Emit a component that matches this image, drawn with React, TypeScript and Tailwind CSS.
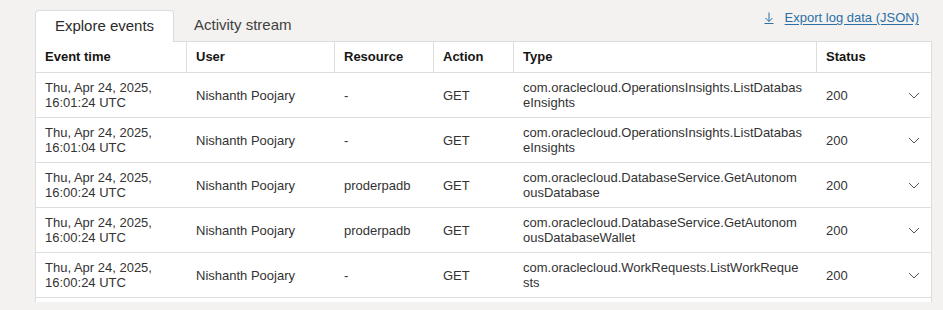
import React from "react";

type Row = {
  date: string;
  time: string;
  user: string;
  resource: string;
  action: string;
  type1: string;
  type2: string;
  status: string;
};

const rows: Row[] = [
  {
    date: "Thu, Apr 24, 2025,",
    time: "16:01:24 UTC",
    user: "Nishanth Poojary",
    resource: "-",
    action: "GET",
    type1: "com.oraclecloud.OperationsInsights.ListDatabas",
    type2: "eInsights",
    status: "200",
  },
  {
    date: "Thu, Apr 24, 2025,",
    time: "16:01:04 UTC",
    user: "Nishanth Poojary",
    resource: "-",
    action: "GET",
    type1: "com.oraclecloud.OperationsInsights.ListDatabas",
    type2: "eInsights",
    status: "200",
  },
  {
    date: "Thu, Apr 24, 2025,",
    time: "16:00:24 UTC",
    user: "Nishanth Poojary",
    resource: "proderpadb",
    action: "GET",
    type1: "com.oraclecloud.DatabaseService.GetAutonom",
    type2: "ousDatabase",
    status: "200",
  },
  {
    date: "Thu, Apr 24, 2025,",
    time: "16:00:24 UTC",
    user: "Nishanth Poojary",
    resource: "proderpadb",
    action: "GET",
    type1: "com.oraclecloud.DatabaseService.GetAutonom",
    type2: "ousDatabaseWallet",
    status: "200",
  },
  {
    date: "Thu, Apr 24, 2025,",
    time: "16:00:24 UTC",
    user: "Nishanth Poojary",
    resource: "-",
    action: "GET",
    type1: "com.oraclecloud.WorkRequests.ListWorkReque",
    type2: "sts",
    status: "200",
  },
];

const cols = "grid grid-cols-[151px_148px_99px_80px_303px_114px]";

function Chevron() {
  return (
    <svg width="12" height="7" viewBox="0 0 12 7" fill="none">
      <path d="M1 1 L6 6 L11 1" stroke="#555" strokeWidth="1" />
    </svg>
  );
}

function DownloadIcon() {
  return (
    <svg width="10" height="12" viewBox="0 0 10 12" fill="none">
      <path d="M5 0.5 V9.5" stroke="#2b6fa6" strokeWidth="1" />
      <path d="M1.5 6 L5 9.5 L8.5 6" stroke="#2b6fa6" strokeWidth="1" />
      <path d="M0.5 11.5 H9.5" stroke="#2b6fa6" strokeWidth="1" />
    </svg>
  );
}

export default function App() {
  return (
    <div className="w-[943px] h-[310px] overflow-hidden bg-[#f3f2f0] pt-[10px] pl-[35px] font-['Liberation_Sans',Arial,sans-serif]">
      <div className="w-[897px] h-[31px] flex justify-between">
        <div className="flex h-full">
          <div className="relative z-10 w-[139px] h-[32px] bg-white border border-b-0 border-[#dcdcdc] rounded-t-[4px] flex items-center justify-center text-[15px] text-[#2a2a2a]">
            Explore events
          </div>
          <div className="pl-[20px] flex items-center text-[15px] text-[#3f3f3f]">
            Activity stream
          </div>
        </div>
        <div className="flex items-start pr-[13px]">
          <a className="flex items-center gap-[11px] text-[13px] leading-[15px] text-[#2b6fa6]">
            <DownloadIcon />
            <span className="underline underline-offset-2">Export log data (JSON)</span>
          </a>
        </div>
      </div>
      <div className="w-[897px] h-[261px] overflow-hidden bg-white border border-b-0 border-[#dcdcdc]">
        <div className={`${cols} h-[31px] border-b border-[#dedede] text-[13px] font-bold text-[#161513]`}>
          <div className="pl-[9px] flex items-center border-r border-[#dedede]">Event time</div>
          <div className="pl-[9px] flex items-center border-r border-[#dedede]">User</div>
          <div className="pl-[9px] flex items-center border-r border-[#dedede]">Resource</div>
          <div className="pl-[9px] flex items-center border-r border-[#dedede]">Action</div>
          <div className="pl-[9px] flex items-center border-r border-[#dedede]">Type</div>
          <div className="pl-[9px] flex items-center">Status</div>
        </div>
        {rows.map((r, i) => (
          <div
            key={i}
            className={`${cols} h-[45px] border-b border-[#dedede] text-[13px] leading-[15px] text-[#333333]`}
          >
            <div className="pl-[9px] flex flex-col justify-center">
              <span>{r.date}</span>
              <span>{r.time}</span>
            </div>
            <div className="pl-[9px] flex items-center">{r.user}</div>
            <div className="pl-[9px] flex items-center">{r.resource}</div>
            <div className="pl-[9px] flex items-center">{r.action}</div>
            <div className="pl-[9px] flex flex-col justify-center">
              <span>{r.type1}</span>
              <span>{r.type2}</span>
            </div>
            <div className="pl-[9px] pr-[11px] flex items-center justify-between">
              <span>{r.status}</span>
              <Chevron />
            </div>
          </div>
        ))}
      </div>
    </div>
  );
}
